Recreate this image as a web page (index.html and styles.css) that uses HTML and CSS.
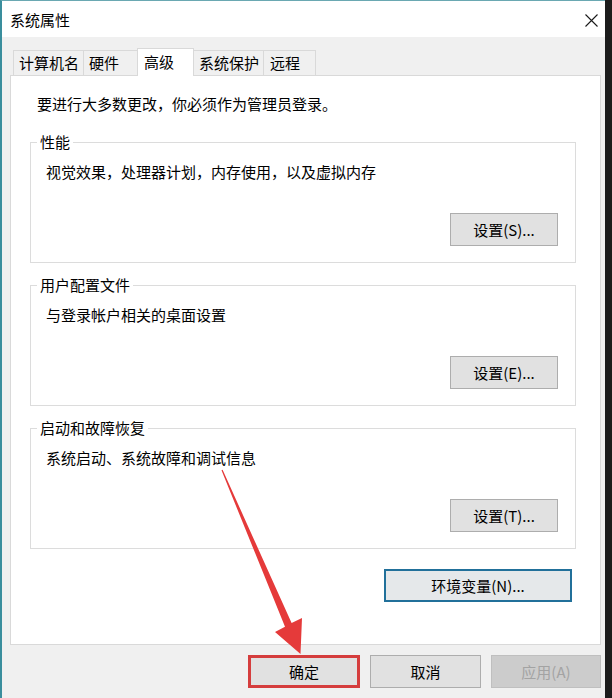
FILE: index.html
```html
<!DOCTYPE html>
<html lang="zh-CN">
<head>
<meta charset="utf-8">
<title>系统属性</title>
<link rel="stylesheet" href="styles.css">
</head>
<body>
<div class="window">
  <div class="titlebar">
    <span class="title">系统属性</span>
    <svg class="close" width="13" height="13" viewBox="0 0 13 13" aria-label="关闭">
      <path d="M0.5 0.5 L12.5 12.5 M12.5 0.5 L0.5 12.5" stroke="#1a1a1a" stroke-width="1.1" fill="none"/>
    </svg>
  </div>
  <div class="content">
    <div class="tabs">
      <div class="tab">计算机名</div>
      <div class="tab">硬件</div>
      <div class="tab active">高级</div>
      <div class="tab">系统保护</div>
      <div class="tab">远程</div>
    </div>
    <div class="panel">
      <p class="note">要进行大多数更改，你必须作为管理员登录。</p>
      <fieldset class="group">
        <legend>性能</legend>
        <p class="desc">视觉效果，处理器计划，内存使用，以及虚拟内存</p>
        <div class="actions"><button class="btn">设置(S)...</button></div>
      </fieldset>
      <fieldset class="group">
        <legend>用户配置文件</legend>
        <p class="desc">与登录帐户相关的桌面设置</p>
        <div class="actions"><button class="btn">设置(E)...</button></div>
      </fieldset>
      <fieldset class="group">
        <legend>启动和故障恢复</legend>
        <p class="desc">系统启动、系统故障和调试信息</p>
        <div class="actions"><button class="btn">设置(T)...</button></div>
      </fieldset>
      <div class="env-row"><button class="btn env">环境变量(N)...</button></div>
    </div>
    <div class="footer">
      <button class="btn ok">确定</button>
      <button class="btn cancel">取消</button>
      <button class="btn apply" disabled>应用(A)</button>
    </div>
  </div>
</div>
<svg class="arrow" width="612" height="698" viewBox="0 0 612 698">
  <polygon points="221.5,470.2 222.6,469.8 291.6,623 302,618 300.5,654 275,632 285,626.8" fill="#e53a3a"/>
</svg>
</body>
</html>
```

FILE: styles.css
```css
html, body {
  margin: 0;
  padding: 0;
  background: #1c1c1c;
}

body {
  width: 612px;
  height: 698px;
  overflow: hidden;
  position: relative;
  font-family: "Noto Sans CJK SC", "Microsoft YaHei", sans-serif;
  font-size: 15px;
  color: #000;
}

.window {
  box-sizing: border-box;
  width: 605px;
  height: 698px;
  background: #f0f0f0;
  border-left: 2px solid #3a8e9d;
  border-top: 1px solid #6aa8b2;
  display: flex;
  flex-direction: column;
}

.titlebar {
  height: 36px;
  background: #fff;
  display: flex;
  align-items: center;
  justify-content: space-between;
  padding: 0 7px 0 8px;
}

.title {
  line-height: 20px;
  margin-top: 2px;
}

.close {
  display: block;
  margin-top: 3px;
}

.content {
  padding: 0 0 0 8px;
  flex: 1;
}

.tabs {
  display: flex;
  align-items: flex-end;
  height: 39px;
  padding-left: 3px;
  margin-bottom: -1px;
  position: relative;
  z-index: 1;
}

.tab {
  box-sizing: border-box;
  height: 25px;
  margin-bottom: 1px;
  margin-left: -1px;
  min-width: 55px;
  padding: 0 4px 0 5px;
  border: 1px solid #d9d9d9;
  border-bottom: none;
  background: #f0f0f0;
  line-height: 24px;
  white-space: nowrap;
}

.tab:first-child {
  margin-left: 0;
}

.tab:last-child {
  min-width: 53px;
  padding-left: 6px;
}

.tab.active {
  height: 28px;
  min-width: 57px;
  margin: 0 0 0 -1px;
  padding-left: 6px;
  background: #fff;
  line-height: 26px;
  position: relative;
  z-index: 2;
}

.panel {
  box-sizing: border-box;
  width: 591px;
  height: 570px;
  background: #fff;
  border: 1px solid #d9d9d9;
  padding: 18px 24px 0 19px;
}

.note {
  margin: 0 0 0 7px;
  line-height: 20px;
}

.group {
  margin: 19px 0 0;
  padding: 0 17px 16px 6px;
  border: 1px solid #dcdcdc;
  min-width: 0;
}

.group + .group {
  margin-top: 13px;
}

.group legend {
  padding: 0 3px;
  line-height: 18px;
}

.desc {
  margin: 11px 0 0 9px;
  line-height: 20px;
}

.actions {
  display: flex;
  justify-content: flex-end;
  margin-top: 31px;
}

.btn {
  box-sizing: border-box;
  width: 108px;
  height: 33px;
  padding: 0;
  background: #e1e1e1;
  border: 1px solid #adadad;
  font: inherit;
  color: #000;
  line-height: 20px;
}

.env-row {
  display: flex;
  justify-content: flex-end;
  margin: 20px 4px 0 0;
}

.btn.env {
  width: 188px;
  border: 2px solid #21709a;
  background: #e5e8ea;
}

.footer {
  width: 591px;
  display: flex;
  justify-content: flex-end;
  gap: 10px;
  padding-top: 10px;
}

.btn.ok {
  width: 112px;
  border: 3px solid #d53d3d;
}

.btn.cancel {
  width: 111px;
}

.btn.apply {
  width: 110px;
  background: #cccccc;
  border-color: #bfbfbf;
  color: #a3a3a3;
}

.arrow {
  position: absolute;
  left: 0;
  top: 0;
  pointer-events: none;
}
```
